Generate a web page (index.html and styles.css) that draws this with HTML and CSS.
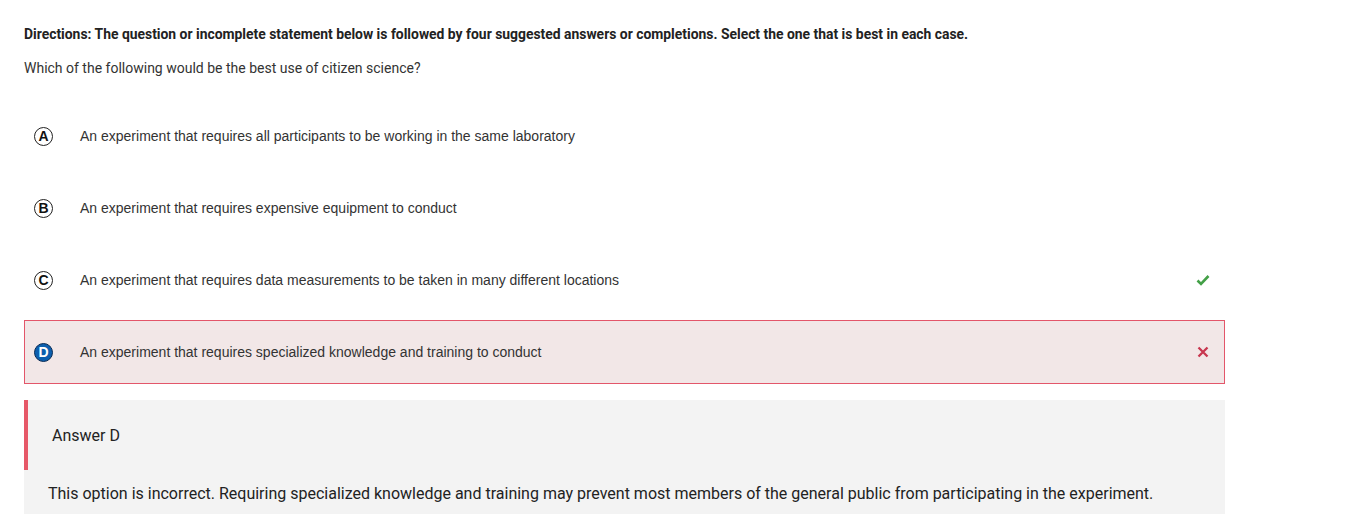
FILE: index.html
```html
<!DOCTYPE html>
<html>
<head>
<meta charset="utf-8">
<link rel="stylesheet" href="styles.css">
</head>
<body>
<div class="page">
  <p class="directions">Directions: The question or incomplete statement below is followed by four suggested answers or completions. Select the one that is best in each case.</p>
  <p class="question">Which of the following would be the best use of citizen science?</p>
  <div class="options">
    <div class="option">
      <span class="letter">A</span>
      <span class="text">An experiment that requires all participants to be working in the same laboratory</span>
    </div>
    <div class="option">
      <span class="letter">B</span>
      <span class="text">An experiment that requires expensive equipment to conduct</span>
    </div>
    <div class="option">
      <span class="letter">C</span>
      <span class="text">An experiment that requires data measurements to be taken in many different locations</span>
      <svg class="mark" width="14" height="12" viewBox="0 0 14 12"><path d="M1.5 6.5 L5 10 L12.5 2" fill="none" stroke="#43a047" stroke-width="2.6"/></svg>
    </div>
    <div class="option wrong">
      <span class="letter selected">D</span>
      <span class="text">An experiment that requires specialized knowledge and training to conduct</span>
      <svg class="mark" width="14" height="12" viewBox="0 0 14 12"><path d="M2.5 1.5 L11.5 10.5 M11.5 1.5 L2.5 10.5" fill="none" stroke="#c8374f" stroke-width="2.3"/></svg>
    </div>
  </div>
  <div class="feedback">
    <div class="feedback-head">Answer D</div>
    <p class="feedback-body">This option is incorrect. Requiring specialized knowledge and training may prevent most members of the general public from participating in the experiment.</p>
  </div>
</div>
</body>
</html>
```
FILE: styles.css
```css
html, body {
  margin: 0;
  padding: 0;
  background: #fff;
}
.page {
  padding: 26px 0 0 24px;
  width: 1201px;
  font-family: Roboto, "Liberation Sans", sans-serif;
  color: #333;
}
.directions {
  margin: 0;
  font-size: 13.9px;
  font-weight: 700;
  line-height: 16px;
  color: #222;
}
.question {
  margin: 18px 0 0;
  font-size: 14px;
  line-height: 16px;
  color: #333;
}
.options {
  margin-top: 28px;
  display: flex;
  flex-direction: column;
  gap: 8px;
}
.option {
  height: 64px;
  box-sizing: border-box;
  display: flex;
  align-items: center;
  padding: 0 0 0 9px;
  border: 1px solid transparent;
  font-family: "Liberation Sans", Arial, sans-serif;
  font-size: 14px;
  color: #333;
}
.option.wrong {
  background: #f2e7e7;
  border-color: #e3566a;
}
.letter {
  width: 17px;
  height: 17px;
  border: 1.6px solid #222;
  border-radius: 50%;
  display: flex;
  align-items: center;
  justify-content: center;
  font-weight: 700;
  font-size: 14px;
  color: #111;
  flex: none;
}
.letter.selected {
  background: #0d5fae;
  border-color: #0a2c55;
  color: #fff;
}
.text {
  margin-left: 27px;
  flex: 1;
}
.mark {
  flex: none;
  margin-right: 14px;
}
.feedback {
  margin-top: 16px;
  background: #f3f3f3;
  padding-bottom: 20px;
}
.feedback-head {
  border-left: 4px solid #e65868;
  height: 70px;
  box-sizing: border-box;
  padding-left: 24px;
  display: flex;
  align-items: center;
  font-size: 16px;
  color: #222;
}
.feedback-body {
  margin: 14px 0 0 24px;
  font-size: 16px;
  line-height: 20px;
  color: #222;
}
```
